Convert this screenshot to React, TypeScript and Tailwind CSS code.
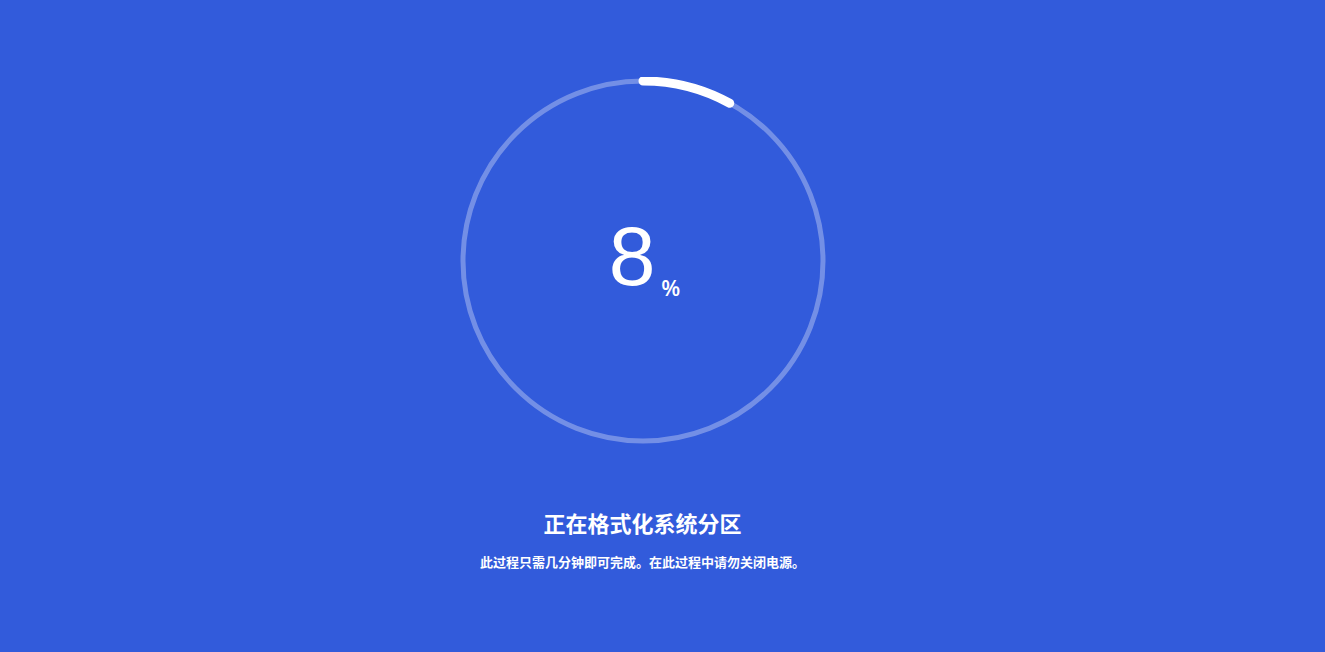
const BG = "bg-[#325bdb]";

const ProgressRing = ({ percent }: { percent: number }) => {
  const size = 368;
  const c = size / 2;
  const r = 180;
  const len = 2 * Math.PI * r;
  const dash = (len * percent) / 100;

  return (
    <div className="relative w-[368px] h-[368px]">
      <svg width={size} height={size} viewBox={`0 0 ${size} ${size}`} className="-rotate-90">
        <circle cx={c} cy={c} r={r} fill="none" stroke="rgba(255,255,255,0.32)" strokeWidth={5} />
        <circle
          cx={c}
          cy={c}
          r={r}
          fill="none"
          stroke="#ffffff"
          strokeWidth={9}
          strokeLinecap="round"
          strokeDasharray={`${dash} ${len}`}
        />
      </svg>
      {/* number sits over the ring */}
      <div className="absolute inset-0 flex items-center justify-center pl-[4px]">
        <div className="flex items-baseline text-white">
          <span className="text-[84px] font-normal leading-none -translate-y-[5px] font-['Liberation_Sans',sans-serif]">{percent}</span>
          <span className="text-[22px] font-semibold leading-none ml-[6px] translate-y-[6px] font-['Open_Sans',sans-serif]">%</span>
        </div>
      </div>
    </div>
  );
};

export default function App() {
  return (
    <div className={`w-full min-h-screen ${BG} flex flex-col items-center pt-[77px] pr-[40px] font-['Noto_Sans_CJK_SC',sans-serif] text-white`}>
      <ProgressRing percent={8} />
      <h1 className="mt-[61px] text-[22px] leading-[33px] font-bold">正在格式化系统分区</h1>
      <p className="mt-[14px] text-[13px] leading-[18px] font-bold">此过程只需几分钟即可完成。在此过程中请勿关闭电源。</p>
    </div>
  );
}
